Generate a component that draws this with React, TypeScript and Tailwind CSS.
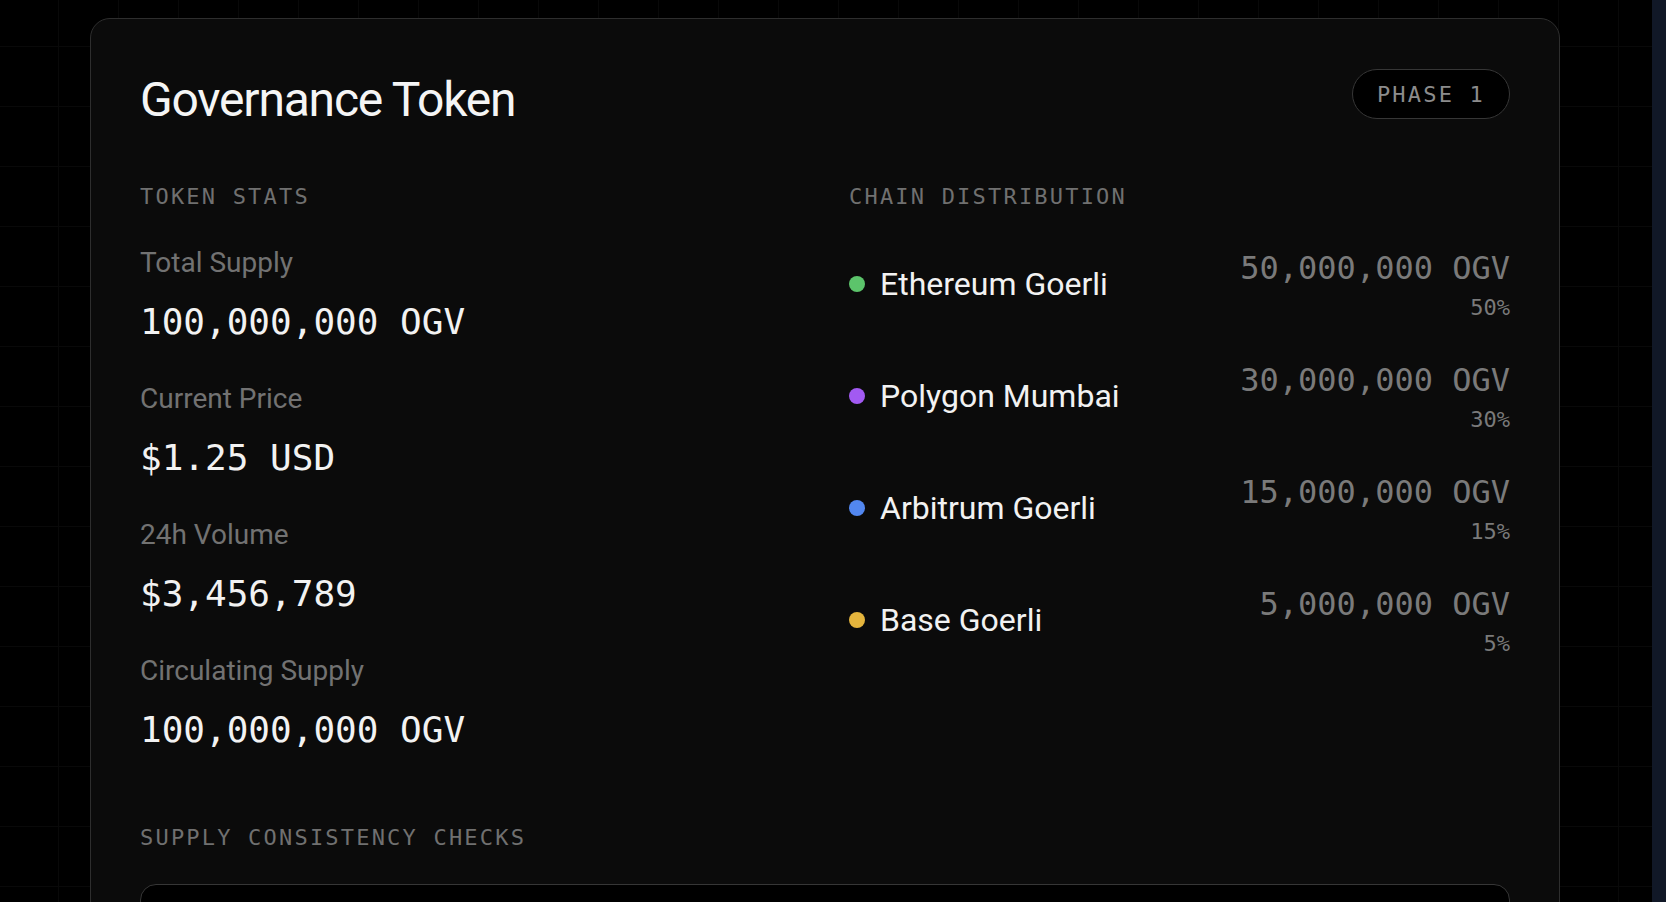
const stats = [
  { label: 'Total Supply', value: '100,000,000 OGV' },
  { label: 'Current Price', value: '$1.25 USD' },
  { label: '24h Volume', value: '$3,456,789' },
  { label: 'Circulating Supply', value: '100,000,000 OGV' },
]

const chains = [
  { name: 'Ethereum Goerli', amount: '50,000,000 OGV', pct: '50%', dot: 'bg-[#5cc46b]' },
  { name: 'Polygon Mumbai', amount: '30,000,000 OGV', pct: '30%', dot: 'bg-[#a25af2]' },
  { name: 'Arbitrum Goerli', amount: '15,000,000 OGV', pct: '15%', dot: 'bg-[#5287f0]' },
  { name: 'Base Goerli', amount: '5,000,000 OGV', pct: '5%', dot: 'bg-[#e5b53d]' },
]

function SectionLabel({ children }: { children: React.ReactNode }) {
  return (
    <h3 className="font-['DejaVu_Sans_Mono',monospace] text-[22px] leading-[33px] tracking-[0.1em] text-[#707070]">
      {children}
    </h3>
  )
}

export default function App() {
  return (
    <div className="flex h-[902px] overflow-hidden font-['Roboto',sans-serif]">
      <main className="flex-1 bg-black bg-[linear-gradient(to_right,#090909_1px,transparent_1px),linear-gradient(to_bottom,#090909_1px,transparent_1px)] bg-size-[60px_60px] bg-position-[58px_46px] pt-[18px]">
        <section className="ml-[90px] w-[1470px] rounded-[20px] border border-[#2e2e2e] bg-[#0b0b0b] p-[49px]">
          {/* header */}
          <div className="flex items-start justify-between">
            <h1 className="text-[48px] leading-[64px] font-normal tracking-tight text-[#f5f5f5]">Governance Token</h1>
            <span className="mt-px flex h-[50px] items-center rounded-full border border-[#363636] bg-black px-[24px] font-['DejaVu_Sans_Mono',monospace] text-[22px] tracking-[0.1em] text-[#8c8c8c]">
              PHASE 1
            </span>
          </div>

          <div className="mt-[48px] grid grid-cols-2 gap-x-12">
            {/* token stats */}
            <div>
              <SectionLabel>TOKEN STATS</SectionLabel>
              <div className="mt-[29px] flex flex-col gap-[29px]">
                {stats.map((s) => (
                  <div key={s.label}>
                    <div className="text-[28px] leading-[42px] text-[#727272]">{s.label}</div>
                    <div className="mt-[11px] font-['DejaVu_Sans_Mono',monospace] text-[36px] leading-[54px] text-[#f2f2f2]">
                      {s.value}
                    </div>
                  </div>
                ))}
              </div>
            </div>

            {/* chain distribution */}
            <div>
              <SectionLabel>CHAIN DISTRIBUTION</SectionLabel>
              <div className="mt-[33px] flex flex-col gap-[36px]">
                {chains.map((c) => (
                  <div key={c.name} className="flex items-center justify-between">
                    <div className="flex items-center gap-[15px]">
                      <span className={`h-4 w-4 rounded-full ${c.dot}`} />
                      <span className="text-[32px] leading-[40px] text-[#f2f2f2]">{c.name}</span>
                    </div>
                    <div className="text-right font-['DejaVu_Sans_Mono',monospace] text-[#7a7a7a]">
                      <div className="text-[32px] leading-[44px]">{c.amount}</div>
                      <div className="mt-[4px] text-[22px] leading-[28px]">{c.pct}</div>
                    </div>
                  </div>
                ))}
              </div>
            </div>
          </div>

          <div className="mt-[64px]">
            <SectionLabel>SUPPLY CONSISTENCY CHECKS</SectionLabel>
            <div className="mt-[30px] h-[200px] rounded-2xl border border-[#363636] bg-black" />
          </div>
        </section>
      </main>
      <div className="w-[14px] bg-[#111827]" />
    </div>
  )
}
